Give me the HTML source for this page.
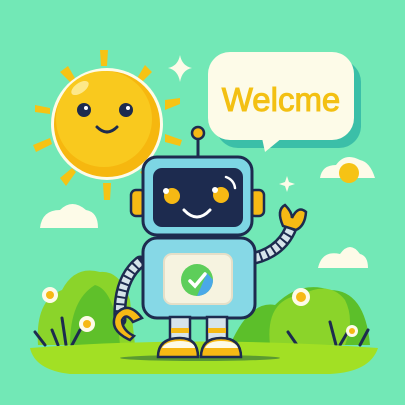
<!DOCTYPE html><html><head><style>html,body{margin:0;padding:0;background:#72e8b6}svg{display:block}</style></head><body>
<svg width="405" height="405" viewBox="0 0 405 405" xmlns="http://www.w3.org/2000/svg">
<rect width="405" height="405" fill="#72e8b6"/>
<path d="M40 228 Q42 210 60 210 Q72 198 86 210 Q98 212 98 228 Z" fill="#fdfbe8"/>
<path d="M318 268 Q322 250 340 254 Q350 240 360 254 Q368 256 368 268 Z" fill="#fdfbe8"/>
<path d="M320 178 Q322 165 336 165 Q345 152 360 160 Q370 162 375 178 Z" fill="#fdfbe8"/>
<circle cx="349" cy="173" r="10" fill="#f6c314"/>
<path d="M180 55 Q182 66 192 68 Q182 70 180 82 Q178 70 168 68 Q178 66 180 55Z" fill="#fdfbe8"/>
<path d="M287 176 l2 6 6 2 -6 2 -2 6 -2 -6 -6 -2 6 -2z" fill="#fdfbe8"/>
<path d="M38 345 Q35 300 62 290 Q75 265 100 272 Q120 270 130 300 L135 345Z" fill="#8bd42a"/>
<path d="M70 345 Q70 300 95 285 Q115 290 120 345Z" fill="#5fc02a"/>
<path d="M230 345 Q250 300 275 305 Q300 280 330 290 Q365 290 370 345Z" fill="#5cbf2a"/>
<path d="M270 345 Q265 300 300 295 Q330 280 345 300 Q355 320 345 345Z" fill="#8bd42a"/>
<g stroke="#1d2b4f" stroke-width="3" stroke-linecap="round" fill="none">
<path d="M35 332 L45 345 M62 318 L66 345 M52 330 L58 345 M80 330 L72 345"/>
<path d="M288 332 L297 345 M330 322 L336 345 M350 328 L340 345 M368 330 L360 345"/>
</g>
<g fill="#fdfbe8"><circle cx="50" cy="295" r="8"/><circle cx="87" cy="324" r="8"/><circle cx="301" cy="297" r="9"/><circle cx="352" cy="331" r="6"/></g>
<g fill="#f6b914"><circle cx="50" cy="295" r="4"/><circle cx="87" cy="324" r="4"/><circle cx="301" cy="297" r="5"/><circle cx="352" cy="331" r="3"/></g>
<path d="M30 348 Q200 335 378 348 Q370 372 330 374 L70 374 Q35 370 30 348Z" fill="#a2e024"/>
<ellipse cx="200" cy="358" rx="80" ry="3" fill="#2c6b3a" opacity=".6"/>
<g fill="#f6c314">
<path d="M100 50 L108 50 L107 66 L101 66Z"/><path d="M60 72 L68 66 L76 80 L72 84Z"/><path d="M145 65 L152 72 L140 84 L136 80Z"/>
<path d="M35 105 L50 108 L50 114 L35 112Z"/><path d="M165 100 L180 98 L180 104 L165 110Z"/>
<path d="M33 145 L50 138 L52 144 L36 152Z"/><path d="M165 134 L182 140 L180 146 L165 142Z"/>
<path d="M60 178 L72 168 L76 172 L66 186Z"/><path d="M103 183 L111 183 L110 200 L104 200Z"/><path d="M140 172 L146 168 L156 182 L150 186Z"/>
</g>
<circle cx="107" cy="124" r="56" fill="#fdfbe8"/>
<circle cx="107" cy="124" r="53" fill="#f6b70f"/>
<circle cx="104" cy="119" r="48" fill="#f9c91e"/>
<ellipse cx="80" cy="88" rx="10" ry="5" fill="#fde88a" transform="rotate(-35 80 88)"/>
<circle cx="84" cy="110" r="7" fill="#1d2b4f"/><circle cx="126" cy="110" r="7" fill="#1d2b4f"/>
<circle cx="86" cy="108" r="2" fill="#fff"/><circle cx="128" cy="108" r="2" fill="#fff"/>
<path d="M97 127 Q107 137 117 127" stroke="#1d2b4f" stroke-width="3" fill="none" stroke-linecap="round"/>
<rect x="216" y="60" width="145" height="88" rx="22" fill="#3bbfa8"/>
<rect x="208" y="52" width="146" height="88" rx="22" fill="#fdfbe8"/>
<path d="M262 138 L282 138 L265 152Z" fill="#fdfbe8"/>
<text x="281" y="111" text-anchor="middle" font-family="Liberation Sans, sans-serif" font-size="33" fill="#f3c013" stroke="#f3c013" stroke-width="1">Welcme</text>
<line x1="198" y1="135" x2="198" y2="158" stroke="#1d2b4f" stroke-width="3"/>
<circle cx="198" cy="133" r="6" fill="#f6b914" stroke="#1d2b4f" stroke-width="2.5"/>
<rect x="131" y="190" width="14" height="26" rx="5" fill="#f6b914" stroke="#1d2b4f" stroke-width="2.5"/>
<rect x="250" y="190" width="14" height="26" rx="5" fill="#f6b914" stroke="#1d2b4f" stroke-width="2.5"/>
<path d="M140 262 Q118 280 120 320" stroke="#1d2b4f" stroke-width="13" fill="none" stroke-linecap="round"/>
<path d="M140 262 Q118 280 120 320" stroke="#d6e4ea" stroke-width="8" fill="none" stroke-dasharray="5 2"/>
<path d="M255 258 Q285 250 293 222" stroke="#1d2b4f" stroke-width="13" fill="none" stroke-linecap="round"/>
<path d="M255 258 Q285 250 293 222" stroke="#d6e4ea" stroke-width="8" fill="none" stroke-dasharray="5 2"/>
<path d="M130 340 Q108 330 116 314 Q128 300 142 318 L133 322 Q126 312 122 320 Q122 330 134 336Z" fill="#f6b914" stroke="#1d2b4f" stroke-width="2.5"/>
<path d="M283 226 Q276 210 285 205 Q292 212 292 218 Q298 205 306 212 Q305 226 296 230Z" fill="#f6b914" stroke="#1d2b4f" stroke-width="2.5"/>
<rect x="143" y="157" width="109" height="78" rx="14" fill="#7dd6e4" stroke="#1d2b4f" stroke-width="3"/>
<rect x="153" y="168" width="90" height="59" rx="9" fill="#1d2b4f"/>
<circle cx="172" cy="196" r="8" fill="#f6b914"/><circle cx="221" cy="195" r="8" fill="#f6b914"/>
<circle cx="166" cy="191" r="3" fill="#fff"/><circle cx="215" cy="190" r="3" fill="#fff"/>
<path d="M184 210 Q197 224 210 210" stroke="#fff" stroke-width="3" fill="none" stroke-linecap="round"/>
<path d="M226 177 Q234 180 235 188" stroke="#fff" stroke-width="2.5" fill="none" stroke-linecap="round"/>
<rect x="143" y="238" width="112" height="80" rx="14" fill="#86d8e6" stroke="#1d2b4f" stroke-width="3"/>
<rect x="164" y="254" width="68" height="50" rx="8" fill="#f6f3e0" stroke="#e5dfc8" stroke-width="2"/>
<circle cx="197" cy="280" r="16" fill="#5dce5a"/>
<path d="M197 296 A16 16 0 0 0 213 280 L207 273Z" fill="#4aa8e8"/>
<path d="M190 281 L195 286 L205 274" stroke="#fff" stroke-width="3.5" fill="none" stroke-linecap="round"/>
<rect x="170" y="317" width="20" height="28" fill="#d6e4ea" stroke="#1d2b4f" stroke-width="2.5"/>
<rect x="207" y="317" width="20" height="28" fill="#d6e4ea" stroke="#1d2b4f" stroke-width="2.5"/>
<rect x="171" y="328" width="18" height="5" fill="#f6b914"/><rect x="208" y="328" width="18" height="5" fill="#f6b914"/>
<path d="M158 357 Q158 338 180 338 Q198 338 198 357Z" fill="#f6b914" stroke="#1d2b4f" stroke-width="2.5"/>
<path d="M201 357 Q201 338 221 338 Q241 338 241 357Z" fill="#f6b914" stroke="#1d2b4f" stroke-width="2.5"/>
<path d="M162 348 Q166 341 180 341 Q194 341 195 348Z" fill="#fdfbe8"/>
<path d="M205 348 Q208 341 221 341 Q236 341 238 348Z" fill="#fdfbe8"/>
</svg>
</body></html>
